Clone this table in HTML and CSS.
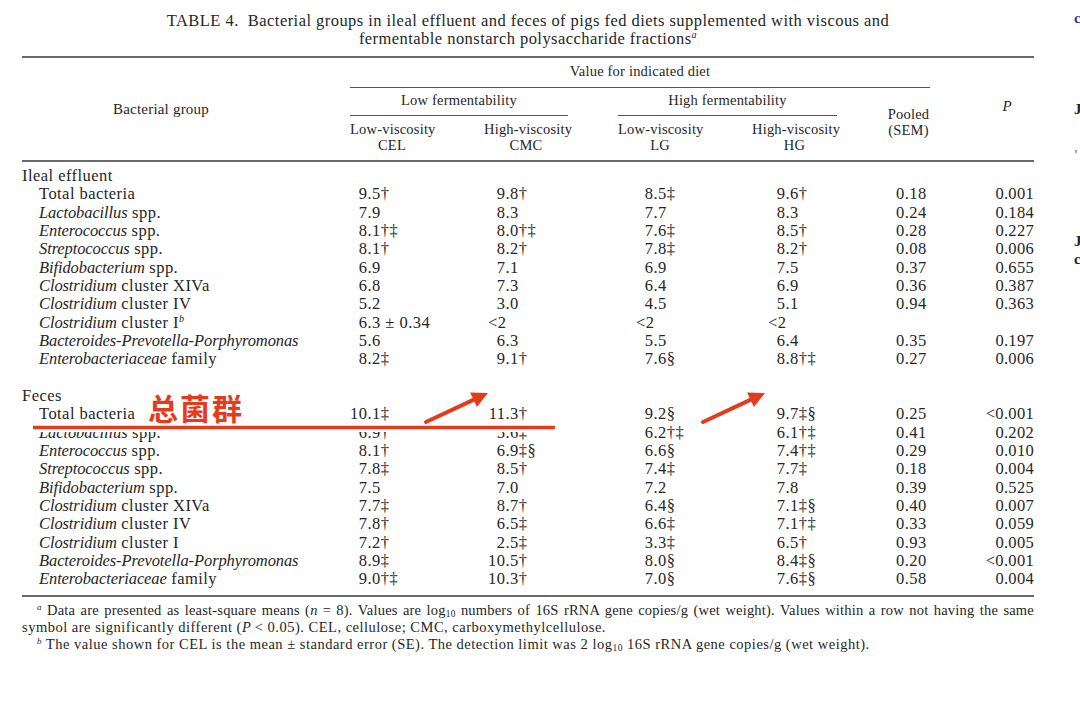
FILE: index.html
```html
<!DOCTYPE html>
<html lang="en">
<head>
<meta charset="utf-8">
<title>TABLE 4</title>
<link rel="stylesheet" href="styles.css">
</head>
<body>
<div class="page">
  <div class="doc">
    <div class="title">TABLE 4.&nbsp; Bacterial groups in ileal effluent and feces of pigs fed diets supplemented with viscous and<br>fermentable nonstarch polysaccharide fractions<sup class="sup-i">a</sup></div>
    <div class="table">
      <div class="grid thead">
        <div class="h-label">Bacterial group</div>
        <div class="h-value">Value for indicated diet</div>
        <div class="h-low">Low fermentability</div>
        <div class="h-high">High fermentability</div>
        <div class="h-sub s1">Low-viscosity<br>CEL</div>
        <div class="h-sub s2">High-viscosity<br>CMC</div>
        <div class="h-sub s3">Low-viscosity<br>LG</div>
        <div class="h-sub s4">High-viscosity<br>HG</div>
        <div class="h-sem">Pooled<br>(SEM)</div>
        <div class="h-p"><i>P</i></div>
      </div>
      <div class="grid tbody">
        <div class="section">Ileal effluent</div>
        <div class="row"><div class="lab">Total bacteria</div><div><span class="n">9</span>.5†</div><div><span class="n">9</span>.8†</div><div><span class="n">8</span>.5‡</div><div><span class="n">9</span>.6†</div><div>0.18</div><div>0.001</div></div>
        <div class="row"><div class="lab"><i>Lactobacillus</i> spp.</div><div><span class="n">7</span>.9</div><div><span class="n">8</span>.3</div><div><span class="n">7</span>.7</div><div><span class="n">8</span>.3</div><div>0.24</div><div>0.184</div></div>
        <div class="row"><div class="lab"><i>Enterococcus</i> spp.</div><div><span class="n">8</span>.1†‡</div><div><span class="n">8</span>.0†‡</div><div><span class="n">7</span>.6‡</div><div><span class="n">8</span>.5†</div><div>0.28</div><div>0.227</div></div>
        <div class="row"><div class="lab"><i>Streptococcus</i> spp.</div><div><span class="n">8</span>.1†</div><div><span class="n">8</span>.2†</div><div><span class="n">7</span>.8‡</div><div><span class="n">8</span>.2†</div><div>0.08</div><div>0.006</div></div>
        <div class="row"><div class="lab"><i>Bifidobacterium</i> spp.</div><div><span class="n">6</span>.9</div><div><span class="n">7</span>.1</div><div><span class="n">6</span>.9</div><div><span class="n">7</span>.5</div><div>0.37</div><div>0.655</div></div>
        <div class="row"><div class="lab"><i>Clostridium</i> cluster XIVa</div><div><span class="n">6</span>.8</div><div><span class="n">7</span>.3</div><div><span class="n">6</span>.4</div><div><span class="n">6</span>.9</div><div>0.36</div><div>0.387</div></div>
        <div class="row"><div class="lab"><i>Clostridium</i> cluster IV</div><div><span class="n">5</span>.2</div><div><span class="n">3</span>.0</div><div><span class="n">4</span>.5</div><div><span class="n">5</span>.1</div><div>0.94</div><div>0.363</div></div>
        <div class="row"><div class="lab"><i>Clostridium</i> cluster I<sup class="sup-i">b</sup></div><div><span class="n">6</span>.3 ± 0.34</div><div><span class="n">&lt;2</span></div><div><span class="n">&lt;2</span></div><div><span class="n">&lt;2</span></div><div></div><div></div></div>
        <div class="row"><div class="lab"><i>Bacteroides-Prevotella-Porphyromonas</i></div><div><span class="n">5</span>.6</div><div><span class="n">6</span>.3</div><div><span class="n">5</span>.5</div><div><span class="n">6</span>.4</div><div>0.35</div><div>0.197</div></div>
        <div class="row"><div class="lab"><i>Enterobacteriaceae</i> family</div><div><span class="n">8</span>.2‡</div><div><span class="n">9</span>.1†</div><div><span class="n">7</span>.6§</div><div><span class="n">8</span>.8†‡</div><div>0.27</div><div>0.006</div></div>
        <div class="spacer"></div>
        <div class="section">Feces</div>
        <div class="row"><div class="lab">Total bacteria</div><div><span class="n">10</span>.1‡</div><div><span class="n">11</span>.3†</div><div><span class="n">9</span>.2§</div><div><span class="n">9</span>.7‡§</div><div>0.25</div><div>&lt;0.001</div></div>
        <div class="row"><div class="lab"><i>Lactobacillus</i> spp.</div><div><span class="n">6</span>.9†</div><div><span class="n">5</span>.6‡</div><div><span class="n">6</span>.2†‡</div><div><span class="n">6</span>.1†‡</div><div>0.41</div><div>0.202</div></div>
        <div class="row"><div class="lab"><i>Enterococcus</i> spp.</div><div><span class="n">8</span>.1†</div><div><span class="n">6</span>.9‡§</div><div><span class="n">6</span>.6§</div><div><span class="n">7</span>.4†‡</div><div>0.29</div><div>0.010</div></div>
        <div class="row"><div class="lab"><i>Streptococcus</i> spp.</div><div><span class="n">7</span>.8‡</div><div><span class="n">8</span>.5†</div><div><span class="n">7</span>.4‡</div><div><span class="n">7</span>.7‡</div><div>0.18</div><div>0.004</div></div>
        <div class="row"><div class="lab"><i>Bifidobacterium</i> spp.</div><div><span class="n">7</span>.5</div><div><span class="n">7</span>.0</div><div><span class="n">7</span>.2</div><div><span class="n">7</span>.8</div><div>0.39</div><div>0.525</div></div>
        <div class="row"><div class="lab"><i>Clostridium</i> cluster XIVa</div><div><span class="n">7</span>.7‡</div><div><span class="n">8</span>.7†</div><div><span class="n">6</span>.4§</div><div><span class="n">7</span>.1‡§</div><div>0.40</div><div>0.007</div></div>
        <div class="row"><div class="lab"><i>Clostridium</i> cluster IV</div><div><span class="n">7</span>.8†</div><div><span class="n">6</span>.5‡</div><div><span class="n">6</span>.6‡</div><div><span class="n">7</span>.1†‡</div><div>0.33</div><div>0.059</div></div>
        <div class="row"><div class="lab"><i>Clostridium</i> cluster I</div><div><span class="n">7</span>.2†</div><div><span class="n">2</span>.5‡</div><div><span class="n">3</span>.3‡</div><div><span class="n">6</span>.5†</div><div>0.93</div><div>0.005</div></div>
        <div class="row"><div class="lab"><i>Bacteroides-Prevotella-Porphyromonas</i></div><div><span class="n">8</span>.9‡</div><div><span class="n">10</span>.5†</div><div><span class="n">8</span>.0§</div><div><span class="n">8</span>.4‡§</div><div>0.20</div><div>&lt;0.001</div></div>
        <div class="row"><div class="lab"><i>Enterobacteriaceae</i> family</div><div><span class="n">9</span>.0†‡</div><div><span class="n">10</span>.3†</div><div><span class="n">7</span>.0§</div><div><span class="n">7</span>.6‡§</div><div>0.58</div><div>0.004</div></div>
      </div>
    </div>
    <div class="notes">
      <p class="fn"><span class="fn-line just"><sup class="sup-i">a</sup> Data are presented as least-square means (<i>n</i> = 8). Values are log<sub>10</sub> numbers of 16S rRNA gene copies/g (wet weight). Values within a row not having the same</span><span class="fn-line cont">symbol are significantly different (<i>P</i> &lt; 0.05). CEL, cellulose; CMC, carboxymethylcellulose.</span></p>
      <p class="fn"><span class="fn-line"><sup class="sup-i">b</sup> The value shown for CEL is the mean ± standard error (SE). The detection limit was 2 log<sub>10</sub> 16S rRNA gene copies/g (wet weight).</span></p>
    </div>
  </div>
  <div class="edge">
    <span class="g g1">c</span>
    <span class="g g2">J</span>
    <span class="g g3">'</span>
    <span class="g g4">J</span>
    <span class="g g5">c</span>
  </div>
  <svg class="marks" width="1080" height="706" viewBox="0 0 1080 706" aria-hidden="true">
    <rect x="33" y="429" width="522" height="3" fill="#ffffff"/>
    <line x1="33" y1="427.5" x2="555" y2="427.5" stroke="#e53b1d" stroke-width="3.5"/>
    <line x1="426" y1="422" x2="476" y2="398.6" stroke="#e53b1d" stroke-width="4" stroke-linecap="round"/>
    <polygon points="488,393 476.9,407 470.1,392.6" fill="#e53b1d"/>
    <line x1="703" y1="422" x2="753" y2="398.6" stroke="#e53b1d" stroke-width="4" stroke-linecap="round"/>
    <polygon points="765,393 753.9,407 747.1,392.6" fill="#e53b1d"/>
  </svg>
  <div class="cn-note">总菌群</div>
</div>
</body>
</html>
```
FILE: styles.css
```css
html, body {
  margin: 0;
  padding: 0;
  background: #ffffff;
}
body {
  width: 1080px;
  height: 706px;
  overflow: hidden;
  font-family: "Liberation Serif", "Times New Roman", serif;
  color: #262626;
}
.page {
  position: relative;
  display: flex;
  width: 1080px;
  height: 706px;
}
.doc {
  width: 1012px;
  margin-left: 22px;
  padding-top: 12px;
}
.title {
  text-align: center;
  font-size: 16.5px;
  letter-spacing: 0.45px;
  line-height: 18px;
  white-space: nowrap;
}
.sup-i {
  font-style: italic;
  font-size: 0.62em;
  line-height: 0;
  vertical-align: 0.55em;
}
sub {
  font-size: 0.65em;
  line-height: 0;
  vertical-align: -0.25em;
}
i {
  letter-spacing: -0.1px;
}
.table {
  margin-top: 8px;
  border-top: 2px solid #6a6a6a;
  border-bottom: 2px solid #6a6a6a;
}
.grid {
  display: grid;
  grid-template-columns: 278px 84px 84px 84px 85px 43px 54px;
  column-gap: 50px;
}
.thead {
  font-size: 14.5px;
  letter-spacing: 0.2px;
  text-align: center;
}
.h-label {
  grid-column: 1;
  grid-row: 1 / 4;
  align-self: center;
  font-size: 15px;
}
.h-value {
  grid-column: 2 / 7;
  grid-row: 1;
  padding: 4px 0 7px;
  line-height: 18px;
  border-bottom: 1px solid #555;
}
.h-low, .h-high {
  grid-row: 2;
  padding: 3px 0 6px;
  line-height: 18px;
  border-bottom: 1px solid #555;
}
.h-low { grid-column: 2 / 4; }
.h-high { grid-column: 4 / 6; }
.h-sub {
  grid-row: 3;
  padding: 5px 0 7px;
  line-height: 16px;
  white-space: nowrap;
}
.s1 { grid-column: 2; }
.s2 { grid-column: 3; }
.s3 { grid-column: 4; }
.s4 { grid-column: 5; }
.h-sem {
  grid-column: 6;
  grid-row: 2 / 4;
  align-self: center;
  line-height: 16px;
  white-space: nowrap;
  margin-top: -4px;
}
.h-p {
  grid-column: 7;
  grid-row: 1 / 4;
  align-self: center;
  font-size: 15px;
  margin-top: -6px;
}
.tbody {
  border-top: 2px solid #6a6a6a;
  padding: 5px 0 6px;
  font-size: 16.5px;
  letter-spacing: 0.45px;
  line-height: 18.33px;
}
.section {
  grid-column: 1 / -1;
}
.spacer {
  grid-column: 1 / -1;
  height: 18.33px;
}
.row {
  display: contents;
}
.row > div {
  white-space: nowrap;
}
.row > .lab {
  padding-left: 17px;
}
.row > :nth-child(3) { padding-left: 4px; }
.row > :nth-child(4) { padding-left: 18px; }
.row > :nth-child(5) { padding-left: 16px; }
.row > :nth-child(6) { padding-left: 9px; }
.row > :nth-child(7) { text-align: right; letter-spacing: 0.3px; }
.n {
  display: inline-block;
  width: 17.5px;
  text-align: right;
}
.notes {
  padding-top: 5px;
  font-size: 14.5px;
  letter-spacing: 0.5px;
  line-height: 17px;
}
.fn {
  margin: 0;
}
.fn-line {
  display: block;
  white-space: nowrap;
}
.fn-line.just {
  white-space: normal;
  text-align: justify;
  text-align-last: justify;
  text-indent: 15px;
  letter-spacing: 0.2px;
}
.fn-line.cont {
  text-indent: 0;
}
.fn + .fn .fn-line {
  text-indent: 15px;
}
.edge {
  flex: 1;
  overflow: hidden;
  display: flex;
  flex-direction: column;
  padding-left: 40px;
  font-family: "Liberation Serif", serif;
  font-size: 15px;
  line-height: 16px;
  font-weight: bold;
  color: #222;
}
.g { display: block; }
.g1 { margin-top: 10px; color: #2a3aa0; }
.g2 { margin-top: 75px; }
.g3 { margin-top: 30px; color: #888; }
.g4 { margin-top: 70px; }
.g5 { margin-top: 2px; }
.marks {
  position: absolute;
  left: 0;
  top: 0;
  pointer-events: none;
}
.cn-note {
  position: absolute;
  left: 148px;
  top: 394px;
  font-family: "Noto Sans CJK SC", sans-serif;
  font-weight: 700;
  font-size: 30px;
  line-height: 26px;
  letter-spacing: 2px;
  color: #e53b1d;
}
```
